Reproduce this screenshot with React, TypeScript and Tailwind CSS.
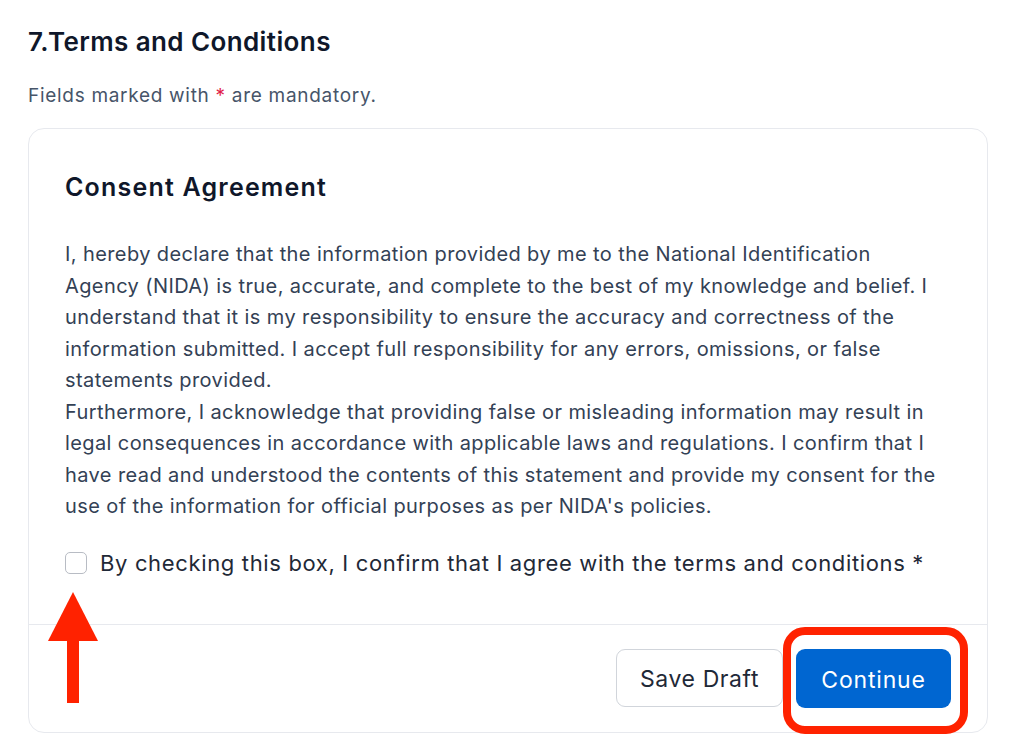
import React, { useState } from 'react';

const paragraphLines = [
  'I, hereby declare that the information provided by me to the National Identification',
  'Agency (NIDA) is true, accurate, and complete to the best of my knowledge and belief. I',
  'understand that it is my responsibility to ensure the accuracy and correctness of the',
  'information submitted. I accept full responsibility for any errors, omissions, or false',
  'statements provided.',
  'Furthermore, I acknowledge that providing false or misleading information may result in',
  'legal consequences in accordance with applicable laws and regulations. I confirm that I',
  "have read and understood the contents of this statement and provide my consent for the",
  "use of the information for official purposes as per NIDA's policies.",
];

const App: React.FC = () => {
  const [agreed, setAgreed] = useState(false);

  return (
    <div className="relative min-h-[750px] w-[1012px] bg-white font-['Inter',sans-serif] px-[28px] pt-[26px]">
      {/* Section title */}
      <h1 className="text-[26px] leading-[32px] font-semibold text-[#0f172a] tracking-[0.4px]">
        7.Terms and Conditions
      </h1>
      <p className="mt-[26px] text-[19px] leading-[24px] text-[#475569] tracking-[0.7px]">
        Fields marked with <span className="text-[#e11d48]">*</span> are mandatory.
      </p>

      {/* Card */}
      <div className="relative mt-[20px] w-[960px] rounded-[16px] border border-[#e7e9ee] bg-white">
        <div className="px-[36px] pt-[42px] pb-[46px]">
          <h2 className="text-[25px] leading-[32px] font-semibold text-[#0f172a] tracking-[1.2px]">
            Consent Agreement
          </h2>
          <div className="mt-[36px] text-[20px] leading-[31.5px] text-[#334155] tracking-[0.4px]">
            {paragraphLines.map((line) => (
              <div key={line} className="whitespace-nowrap">
                {line}
              </div>
            ))}
          </div>

          <label className="mt-[25px] flex items-center gap-[13px] cursor-pointer">
            <input
              type="checkbox"
              checked={agreed}
              onChange={(e) => setAgreed(e.target.checked)}
              className="appearance-none w-[22px] h-[22px] rounded-[5px] border border-[#b8bcc4] bg-white checked:bg-[#0066d1] checked:border-[#0066d1]"
            />
            <span className="text-[22px] leading-[30px] text-[#1f2937] tracking-[0.65px]">
              By checking this box, I confirm that I agree with the terms and conditions *
            </span>
          </label>
        </div>

        {/* Footer actions */}
        <div className="border-t border-[#e7e9ee] px-[36px] pt-[24px] pb-[24px] flex justify-end gap-[13px]">
          <button className="w-[167px] h-[58px] pt-[4px] rounded-[9px] border border-[#d1d5db] bg-white text-[23px] text-[#1f2937] tracking-[0.6px]">
            Save Draft
          </button>
          <button className="w-[155px] h-[59px] pt-[4px] rounded-[9px] bg-[#0066d1] text-[23px] text-white tracking-[0.8px]">
            Continue
          </button>
        </div>

        {/* Annotation: highlight around Continue */}
        <div className="absolute left-[754px] top-[498px] w-[185px] h-[107px] rounded-[22px] border-[8px] border-[#ff2200] pointer-events-none" />
      </div>

      {/* Annotation: arrow pointing at checkbox */}
      <svg
        className="absolute left-[46px] top-[590px] pointer-events-none"
        width="54"
        height="116"
        viewBox="0 0 54 116"
      >
        <polygon points="27,2 2,51 52,51" fill="#ff2200" />
        <rect x="21" y="50" width="12" height="63" fill="#ff2200" />
      </svg>
    </div>
  );
};

export default App;
